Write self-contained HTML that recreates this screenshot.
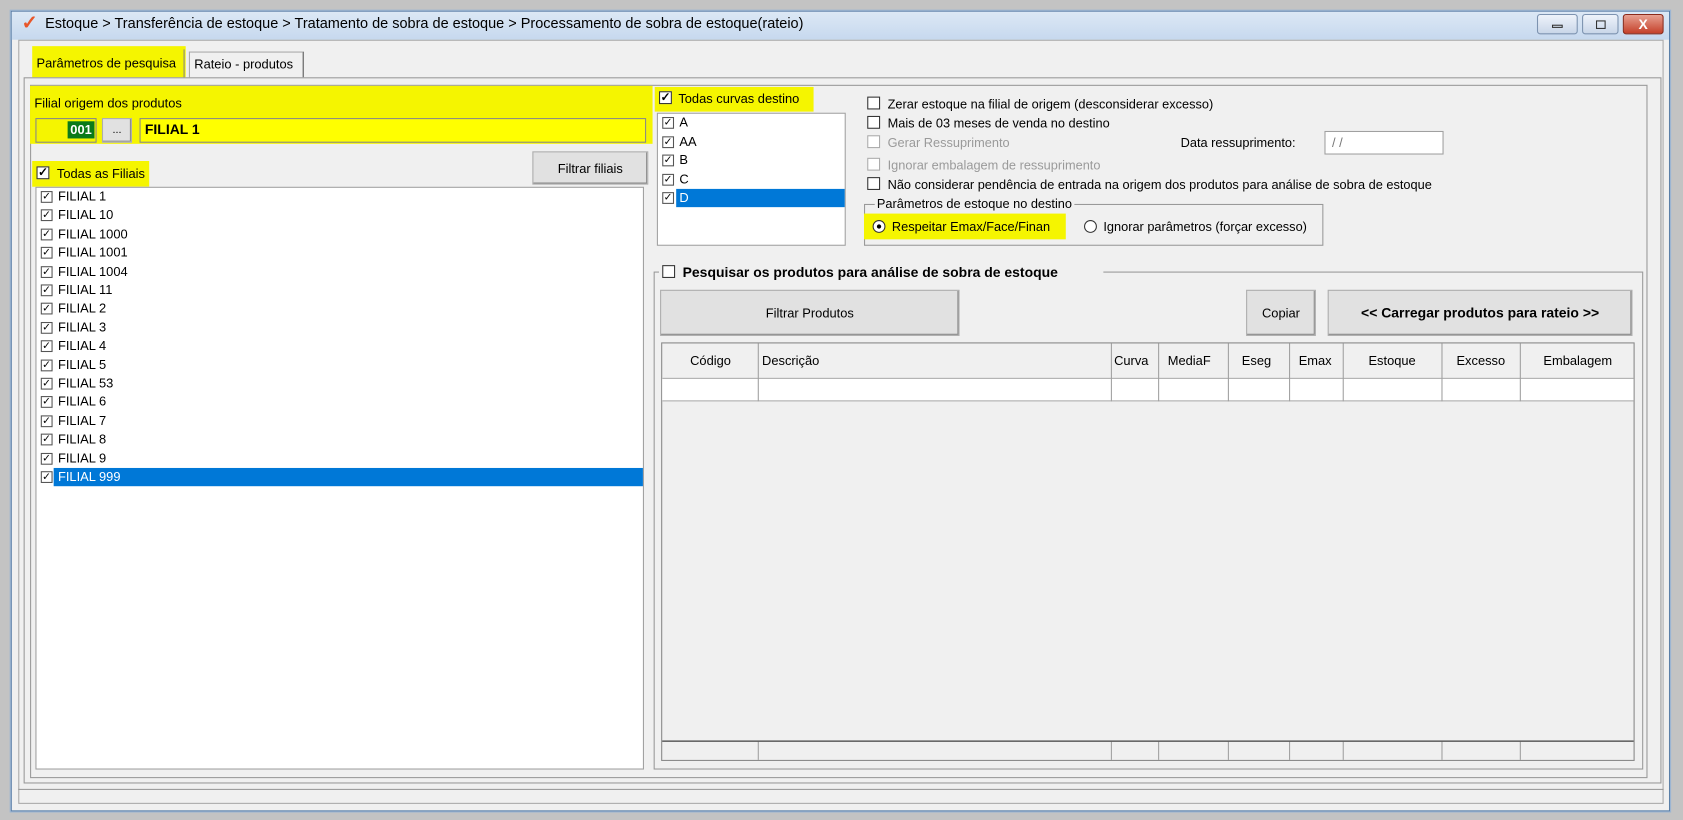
<!DOCTYPE html>
<html><head><meta charset="utf-8"><style>
*{box-sizing:border-box;margin:0;padding:0}
body{width:1683px;height:820px;overflow:hidden;background:#c3c3c3;font-family:"Liberation Sans",sans-serif;font-size:12px;color:#000}
#w{position:absolute;left:0;top:0;width:1568px;height:764px;transform:scale(1.0733);transform-origin:0 0}
.a{position:absolute}
.t{position:absolute;white-space:nowrap;line-height:14px}
.box{position:absolute;border:1px solid #a0a0a0;background:#fff}
.cb{position:absolute;width:12px;height:12px;border:1px solid #333;background:#fff;font-size:11px;line-height:10px;text-align:center;font-weight:bold}
.btn{position:absolute;background:#e1e1e1;border:1px solid #adadad;text-align:center;box-shadow:inset -1px -1px 0 #888}
.y{position:absolute;background:#f5f500}
.dis{color:#9a9a9a}
.row{position:absolute;left:2px;height:17px;line-height:17px;padding-left:18px;white-space:nowrap}
.row i{position:absolute;left:2px;top:3px;width:11px;height:11px;border:1px solid #555;background:#fff;font-style:normal;font-size:10px;line-height:9px;text-align:center}
.col{position:absolute;top:0;bottom:0;border-left:1px solid #a0a0a0}
.o{font-size:11.9px}
</style></head><body><div id="w">
<div class="a" style="left:10px;top:10px;width:1546px;height:746px;background:#f0f0f0;border:1px solid #5a7fa8;box-shadow:0 0 0 1px #9bb5d3"></div>
<div class="a" style="left:11px;top:11px;width:1544px;height:26px;background:linear-gradient(#dce8f5,#c6d8ee)"></div>
<div class="t" style="left:20px;top:14px;font-size:18px;color:#e8562a;font-weight:bold">✓</div>
<div class="t" style="left:42px;top:15px;font-size:13.5px">Estoque &gt; Transferência de estoque &gt; Tratamento de sobra de estoque &gt; Processamento de sobra de estoque(rateio)</div>
<div class="a" style="left:1432px;top:13px;width:38px;height:19px;border:1px solid #7d93b0;border-radius:3px;background:linear-gradient(#eef3fa,#c9d6e8)"><div class="a" style="left:13px;top:9px;width:10px;height:3px;border:1px solid #333"></div></div>
<div class="a" style="left:1474px;top:13px;width:34px;height:19px;border:1px solid #7d93b0;border-radius:3px;background:linear-gradient(#eef3fa,#c9d6e8)"><div class="a" style="left:12px;top:5px;width:9px;height:8px;border:1px solid #333"></div></div>
<div class="a" style="left:1512px;top:13px;width:38px;height:19px;border:1px solid #8a2a1a;border-radius:3px;background:linear-gradient(#e8a090,#c4402a);color:#fff;font-weight:bold;text-align:center;line-height:17px;font-size:13px">X</div>
<div class="a" style="left:17px;top:37px;width:1533px;height:712px;border:1px solid #aaa"></div>
<div class="y" style="left:30px;top:43px;width:143px;height:29px"></div>
<div class="a" style="left:31px;top:46px;width:141px;height:26px;border-right:1px solid #888"></div>
<div class="t" style="left:34px;top:52px">Parâmetros de pesquisa</div>
<div class="a" style="left:176px;top:48px;width:107px;height:24px;border:1px solid #aaa;border-bottom:none;background:#f0f0f0;border-right-color:#555"></div>
<div class="t" style="left:181px;top:53px">Rateio - produtos</div>
<div class="a" style="left:22px;top:72px;width:1526px;height:658px;border:1px solid #999"></div>
<div class="a" style="left:17px;top:735px;width:1533px;height:1px;background:#999"></div>
<div class="a" style="left:28px;top:79px;width:1507px;height:646px;border:1px solid #999"></div>
<div class="y" style="left:28px;top:80px;width:580px;height:54px"></div>
<div class="t" style="left:32px;top:89px">Filial origem dos produtos</div>
<div class="a" style="left:33px;top:110px;width:57px;height:23px;border:1px solid #888;background:#f5f500"></div>
<div class="a" style="left:63px;top:113px;width:25px;height:16px;background:#0a7a1a;color:#fff;font-weight:bold;line-height:16px;text-align:center">001</div>
<div class="btn" style="left:95px;top:110px;width:28px;height:23px;line-height:22px;font-size:10px">...</div>
<div class="a" style="left:130px;top:110px;width:472px;height:23px;border:1px solid #888;background:#ff0;font-weight:bold;font-size:13px;line-height:20px;padding-left:4px">FILIAL 1</div>
<div class="y" style="left:30px;top:150px;width:109px;height:24px"></div>
<div class="cb" style="left:34px;top:155px">✓</div>
<div class="t" style="left:53px;top:155px">Todas as Filiais</div>
<div class="btn" style="left:496px;top:141px;width:108px;height:31px;line-height:30px">Filtrar filiais</div>
<div class="box" style="left:33px;top:174px;width:567px;height:543px">
<div class="row" style="top:0">FILIAL 1<i>✓</i></div>
<div class="row" style="top:17.4px">FILIAL 10<i>✓</i></div>
<div class="row" style="top:34.8px">FILIAL 1000<i>✓</i></div>
<div class="row" style="top:52.2px">FILIAL 1001<i>✓</i></div>
<div class="row" style="top:69.6px">FILIAL 1004<i>✓</i></div>
<div class="row" style="top:87px">FILIAL 11<i>✓</i></div>
<div class="row" style="top:104.4px">FILIAL 2<i>✓</i></div>
<div class="row" style="top:121.8px">FILIAL 3<i>✓</i></div>
<div class="row" style="top:139.2px">FILIAL 4<i>✓</i></div>
<div class="row" style="top:156.6px">FILIAL 5<i>✓</i></div>
<div class="row" style="top:174px">FILIAL 53<i>✓</i></div>
<div class="row" style="top:191.4px">FILIAL 6<i>✓</i></div>
<div class="row" style="top:208.8px">FILIAL 7<i>✓</i></div>
<div class="row" style="top:226.2px">FILIAL 8<i>✓</i></div>
<div class="row" style="top:243.6px">FILIAL 9<i>✓</i></div>
<div class="a" style="left:16px;top:261px;width:549px;height:17px;background:#0078d7"></div>
<div class="row" style="top:261px;color:#fff">FILIAL 999<i style="color:#000">✓</i></div>
</div>
<div class="y" style="left:610px;top:81px;width:148px;height:23px"></div>
<div class="cb" style="left:614px;top:85px">✓</div>
<div class="t" style="left:632px;top:85px">Todas curvas destino</div>
<div class="box" style="left:612px;top:105px;width:176px;height:124px">
<div class="row" style="top:0">A<i>✓</i></div>
<div class="row" style="top:17.5px">AA<i>✓</i></div>
<div class="row" style="top:35px">B<i>✓</i></div>
<div class="row" style="top:52.5px">C<i>✓</i></div>
<div class="a" style="left:17px;top:70px;width:157px;height:17px;background:#0078d7"></div>
<div class="row" style="top:70px;color:#fff">D<i style="color:#000">✓</i></div>
</div>
<div class="cb" style="left:808px;top:90px"></div><div class="t o" style="left:827px;top:90px">Zerar estoque na filial de origem (desconsiderar excesso)</div>
<div class="cb" style="left:808px;top:108px"></div><div class="t o" style="left:827px;top:108px">Mais de 03 meses de venda no destino</div>
<div class="cb" style="left:808px;top:126px;border-color:#aaa"></div><div class="t dis o" style="left:827px;top:126px">Gerar Ressuprimento</div>
<div class="t o" style="left:1100px;top:126px">Data ressuprimento:</div>
<div class="box" style="left:1234px;top:122px;width:111px;height:22px;color:#777;padding:3px 6px">/ /</div>
<div class="cb" style="left:808px;top:147px;border-color:#aaa"></div><div class="t dis o" style="left:827px;top:147px">Ignorar embalagem de ressuprimento</div>
<div class="cb" style="left:808px;top:165px"></div><div class="t o" style="left:827px;top:165px">Não considerar pendência de entrada na origem dos produtos para análise de sobra de estoque</div>
<div class="a" style="left:805px;top:190px;width:428px;height:39px;border:1px solid #999"></div>
<div class="t o" style="left:815px;top:183px;background:#f0f0f0;padding:0 2px">Parâmetros de estoque no destino</div>
<div class="y" style="left:805px;top:199px;width:188px;height:24px"></div>
<div class="a" style="left:813px;top:205px;width:12px;height:12px;border:1px solid #333;border-radius:50%;background:#fff"><div class="a" style="left:3px;top:3px;width:4px;height:4px;border-radius:50%;background:#000"></div></div>
<div class="t o" style="left:831px;top:204px">Respeitar Emax/Face/Finan</div>
<div class="a" style="left:1010px;top:205px;width:12px;height:12px;border:1px solid #333;border-radius:50%;background:#fff"></div>
<div class="t o" style="left:1028px;top:204px">Ignorar parâmetros (forçar excesso)</div>
<div class="a" style="left:609px;top:253px;width:922px;height:464px;border:1px solid #999"></div>
<div class="a" style="left:614px;top:245px;width:414px;height:18px;background:#f0f0f0"></div>
<div class="cb" style="left:617px;top:247px"></div>
<div class="t" style="left:636px;top:247px;font-weight:bold;font-size:13px">Pesquisar os produtos para análise de sobra de estoque</div>
<div class="btn" style="left:615px;top:270px;width:279px;height:43px;line-height:42px">Filtrar Produtos</div>
<div class="btn" style="left:1161px;top:270px;width:65px;height:43px;line-height:42px">Copiar</div>
<div class="btn" style="left:1237px;top:270px;width:284px;height:43px;line-height:42px;font-weight:bold;font-size:13px">&lt;&lt; Carregar produtos para rateio &gt;&gt;</div>
<div class="a" style="left:616px;top:319px;width:907px;height:390px;border:1px solid #888;background:#f0f0f0">
<div class="a" style="left:0;top:32px;width:905px;height:22px;background:#fff;border-top:1px solid #aaa;border-bottom:1px solid #aaa"></div>
<div class="a" style="left:0;top:370px;width:905px;height:1px;background:#222"></div>
<div class="a" style="left:0;top:0;width:905px;height:54px">
<div class="col" style="left:89px"></div><div class="col" style="left:418px"></div><div class="col" style="left:462px"></div><div class="col" style="left:527px"></div><div class="col" style="left:584px"></div><div class="col" style="left:634px"></div><div class="col" style="left:726px"></div><div class="col" style="left:799px"></div></div>
<div class="a" style="left:0;top:371px;width:905px;height:17px">
<div class="col" style="left:89px"></div><div class="col" style="left:418px"></div><div class="col" style="left:462px"></div><div class="col" style="left:527px"></div><div class="col" style="left:584px"></div><div class="col" style="left:634px"></div><div class="col" style="left:726px"></div><div class="col" style="left:799px"></div></div>
<div class="t" style="left:26px;top:9px">Código</div>
<div class="t" style="left:93px;top:9px">Descrição</div>
<div class="t" style="left:421px;top:9px">Curva</div>
<div class="t" style="left:471px;top:9px">MediaF</div>
<div class="t" style="left:540px;top:9px">Eseg</div>
<div class="t" style="left:593px;top:9px">Emax</div>
<div class="t" style="left:658px;top:9px">Estoque</div>
<div class="t" style="left:740px;top:9px">Excesso</div>
<div class="t" style="left:821px;top:9px">Embalagem</div>
</div>
</div></body></html>
